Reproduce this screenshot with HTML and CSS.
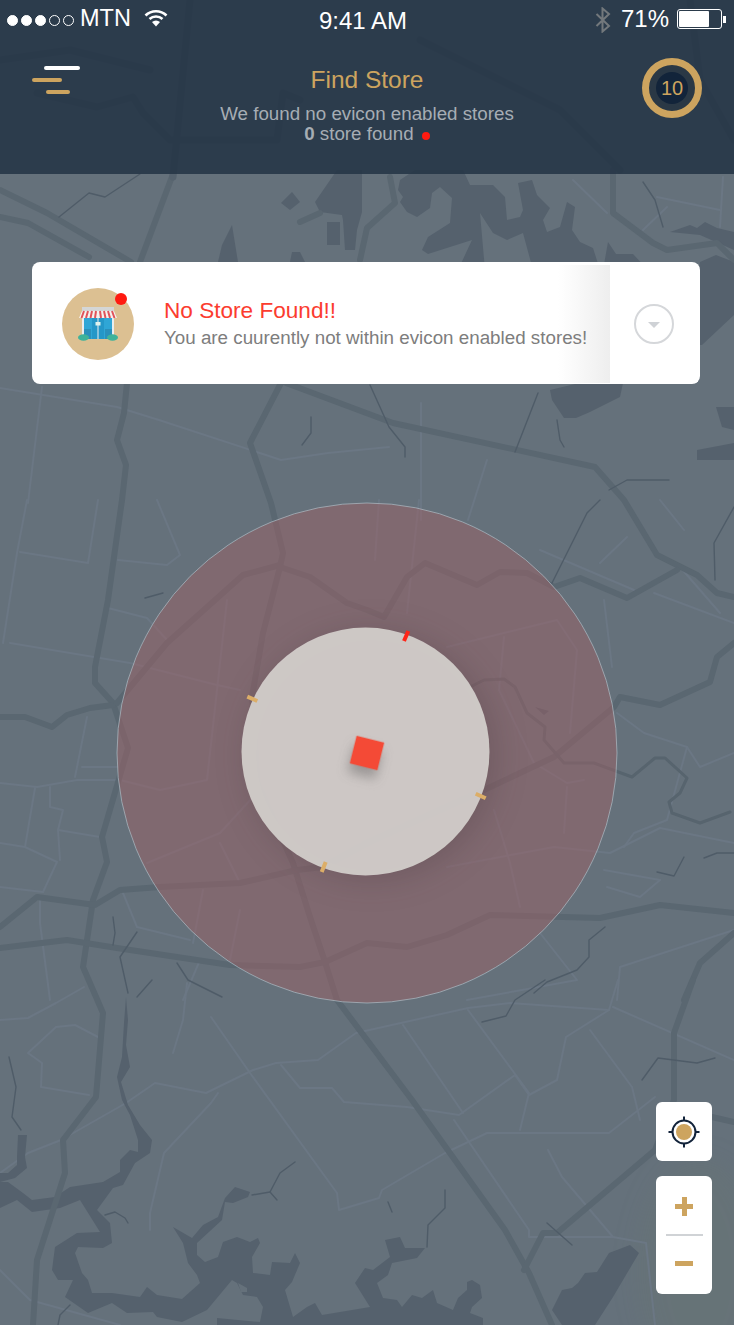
FILE: index.html

```html
<!DOCTYPE html>
<html lang="en">
<head>
  <meta charset="UTF-8" />
  <title>Find Store</title>
  <link rel="stylesheet" href="styles.css">
</head>
<body>
<div class="screen">

  <!-- map backdrop -->
  <svg class="map" viewBox="0 0 734 1325" width="734" height="1325">
    <ellipse class="tint" cx="700" cy="1270" rx="60" ry="110" />
    <g class="road-light">
      <polyline points="0,1173 28,1153 61,1140 126,1103 155,1083 206,1093 253,1070 276,1063 318,1060 356,1033 468,1008 510,1003 609,1010 618,980" />
      <polyline points="211,1017 250,1073 337,1193 339,1210 379,1198 382,1190 445,1153 487,1133 609,1133 655,1097" />
      <polyline points="281,1065 300,1088 332,1088 344,1102 407,1107 459,1115 515,1075 529,1095 557,1080 566,1037 609,1010" />
      <polyline points="468,1010 529,1093 520,1130" />
      <polyline points="403,1025 463,1113" />
      <polyline points="590,1030 632,1087 640,1120" />
      <polyline points="454,1120 529,1230 529,1237 613,1237 646,1243 655,1325" />
      <polyline points="548,1150 562,1177 613,1237" />
      <polyline points="98,1037 75,1025 56,1027 28,1053 42,1063 41,1087 89,1095" />
      <polyline points="0,1020 28,1018 56,1003 84,987" />
      <polyline points="173,1053 183,1020 187,983" />
      <polyline points="218,1093 211,1103 164,1153 150,1213 150,1230" />
      <polyline points="613,1007 734,1060" />
      <polyline points="0,388 117,407 159,420 281,460 328,453 389,447" />
      <polyline points="42,387 28,503" />
      <polyline points="487,460 468,520" />
      <polyline points="421,403 421,520" />
      <polyline points="573,180 607,213" />
      <polyline points="657,197 720,210" />
      <polyline points="667,207 643,230" />
      <polyline points="723,177 720,227" />
      <polyline points="27,500 17,553 3,643" />
      <polyline points="20,552 88,563 98,500" />
      <polyline points="118,560 167,565 180,555 157,500" />
      <polyline points="108,608 147,618 167,640" />
      <polyline points="10,643 130,663 217,685 240,690" />
      <polyline points="227,600 207,780 160,790 120,780 77,780 37,787 0,783" />
      <polyline points="82,767 117,767" />
      <polyline points="87,717 75,777" />
      <polyline points="35,788 25,847 57,862 43,892" />
      <polyline points="0,843 25,847" />
      <polyline points="50,787 50,807 63,810 58,830 100,837" />
      <polyline points="58,830 60,860" />
      <polyline points="0,887 43,892" />
      <polyline points="147,863 220,833 253,797" />
      <polyline points="220,843 240,883" />
      <polyline points="203,890 193,943" />
      <polyline points="240,910 230,960" />
      <polyline points="123,893 137,927 190,940" />
      <polyline points="40,900 40,923 50,1000" />
      <polyline points="200,960 183,1000" />
      <polyline points="419,500 407,613" />
      <polyline points="379,500 375,560" />
      <polyline points="447,647 557,620 577,650 570,733" />
      <polyline points="504,637 499,690 534,763 567,783 584,780" />
      <polyline points="612,667 604,600" />
      <polyline points="447,867 554,847 610,853 660,828 734,843" />
      <polyline points="494,810 510,863 520,907" />
      <polyline points="567,787 564,833" />
      <polyline points="617,713 644,733 687,747 700,767 734,753" />
      <polyline points="687,747 667,820 634,833 624,847" />
      <polyline points="540,550 634,590" />
      <polyline points="720,613 680,567" />
      <polyline points="734,623 654,593" />
      <polyline points="684,530 660,500" />
      <polyline points="627,537 600,563" />
      <polyline points="604,870 660,880" />
      <polyline points="607,887 640,897 660,880" />
      <polyline points="540,933 577,980 467,1000" />
      <polyline points="734,930 620,967 617,1000" />
      <polyline points="0,1270 30,1300 120,1325" />
    </g>
    <g class="water">
      <polygon points="315,202 337,170 362,170 362,212 357,230 355,250 345,250 343,220 342,215 320,212" />
      <polygon points="327,222 340,222 340,245 327,245" />
      <polygon points="398,190 400,180 415,170 463,170 470,185 493,185 505,197 507,220 520,217 523,210 518,183 532,180 537,195 550,208 543,220 547,232 560,227 567,202 575,207 572,230 580,242 593,248 600,270 533,270 523,233 507,240 493,233 480,213 485,270 458,270 472,240 428,254 422,250 428,237 450,223 452,198 440,187 432,193 430,208 417,217 407,212 400,202 403,197" />
      <polygon points="603,270 608,242 616,254 633,254 648,270" />
      <polygon points="670,232 690,225 697,228 705,222 717,228 734,232 734,250 700,235" />
      <polygon points="700,262 716,255 734,262 734,315 702,345 690,345" />
      <polygon points="550,390 575,384 623,383 620,397 590,412 576,418 564,418 552,400" />
      <polygon points="716,407 734,407 734,430 722,427" />
      <polygon points="697,450 734,443 734,460 697,460" />
      <polygon points="218,262 222,245 232,225 238,262" />
      <polygon points="281,203 292,192 300,202 290,210" />
      <polygon points="290,262 292,252 300,252 305,262" />
      <polygon points="138,1140 152,1140 150,1153 135,1163 123,1185 113,1188 97,1210 110,1223 112,1243 103,1248 78,1247 75,1253 82,1273 88,1280 92,1293 112,1293 140,1297 147,1287 157,1295 182,1299 200,1283 197,1275 188,1263 183,1243 173,1227 192,1238 203,1225 218,1217 225,1198 235,1187 250,1192 248,1197 233,1203 225,1202 222,1220 197,1243 197,1255 205,1262 218,1257 223,1242 237,1237 250,1242 258,1238 260,1243 252,1257 253,1273 270,1275 272,1262 290,1263 295,1253 300,1263 292,1282 285,1290 293,1317 307,1307 315,1303 322,1315 370,1307 355,1283 365,1268 373,1270 390,1257 385,1240 400,1237 405,1248 425,1248 417,1258 392,1263 388,1275 377,1283 383,1298 397,1300 402,1307 412,1295 422,1298 433,1290 437,1303 453,1310 458,1298 467,1290 467,1282 472,1280 480,1285 482,1298 472,1307 470,1313 483,1318 483,1325 217,1325 217,1318 260,1322 263,1307 257,1297 243,1295 237,1283 232,1280 207,1310 182,1322 157,1317 153,1312 127,1313 112,1303 88,1313 65,1297 73,1280 58,1280 52,1270 55,1247 77,1233 100,1232 80,1200 60,1208 32,1212 17,1200 0,1208 0,1182 8,1182 23,1193 32,1200 55,1197 70,1187 103,1182 120,1172 120,1160 130,1150 138,1152" />
      <polygon points="126,997 128,1020 126,1045 130,1067 121,1082 128,1105 140,1125 152,1140 138,1140 130,1115 122,1100 117,1077 122,1057 124,1023" />
      <polygon points="18,1135 27,1135 25,1157 27,1168 15,1178 0,1182 0,1173 8,1173 17,1165 17,1157" />
      <polygon points="630,1245 639,1253 613,1297 595,1325 562,1325 552,1310 562,1290 572,1288 578,1283 585,1273 597,1272 609,1253" />
      <polygon points="535,707 549,711 544,715" />
      <polygon class="island" points="238,1283 247,1288 247,1292 241,1292" />
    </g>
    <g class="road">
      <polyline points="0,190 47,213 131,262" />
      <polyline points="0,217 28,223 89,257" />
      <polyline points="173,174 140,262" />
      <polyline points="613,170 613,213 653,243 667,250 717,243 734,260" />
      <polyline points="390,177 395,203 367,228 360,260" />
      <polyline points="300,222 320,213" />
      <polyline points="127,383 124,413 117,440 126,465 122,500 108,600 95,667 95,683 113,703 128,748 102,837 107,862 93,900 83,967 103,1013 96,1097 63,1140 65,1173 37,1260 33,1325" />
      <polyline points="0,717 25,717 52,727 67,715 90,708 113,705" />
      <polyline points="117,703 167,643 243,575 280,565" />
      <polyline points="281,383 250,443 271,503 283,553 280,567 263,633 252,697 257,783 293,863 310,917 325,962 337,1000 412,1100 505,1230 529,1273 552,1325" />
      <polyline points="286,383 393,423 595,467 624,500 657,555 697,575 717,593 734,597" />
      <polyline points="280,567 310,577 347,603 367,610 384,617 407,577 425,563 477,585 500,572 527,573 554,587 580,578 627,598 677,570" />
      <polyline points="734,643 717,657 710,682 660,705 620,697 614,707 554,757 484,790 367,843 323,867 297,870 240,883 160,887 120,890 95,905 37,897 0,927" />
      <polyline points="0,948 67,940 117,948 230,965 300,967 325,962 367,943 407,947 447,935 490,915 600,918 660,905 734,913" />
      <polyline points="684,1000 700,963 734,933" />
      <polyline points="693,980 674,1033 674,1100 655,1150 557,1233 543,1233 524,1270" />
      <polyline points="712,1117 734,1122" />
    </g>
    <g class="road-thin">
      <polyline points="470,687 484,680 504,679 515,687 527,713 545,727 544,740 564,763 594,763 632,777 655,758 665,758 687,778 680,793 669,802 672,813 700,823 730,812" />
    </g>
    <g class="stream">
      <polyline points="9,1057 16,1087 12,1117 21,1130" />
      <polyline points="59,217 89,193 105,197 140,174" />
      <polyline points="311,417 311,433 302,445" />
      <polyline points="370,385 389,427 405,447 405,457" />
      <polyline points="538,393 515,452" />
      <polyline points="557,420 560,440 564,447" />
      <polyline points="609,490 627,480 669,480" />
      <polyline points="643,182 655,200 663,227" />
      <polyline points="552,583 567,553 587,513 600,500" />
      <polyline points="734,507 714,543 715,580" />
      <polyline points="657,872 674,876 684,857" />
      <polyline points="704,858 717,853 734,853" />
      <polyline points="605,927 589,940 589,957 577,970 547,982 534,993" />
      <polyline points="113,917 115,933 113,945" />
      <polyline points="137,932 120,957 128,993" />
      <polyline points="152,980 137,997" />
      <polyline points="177,963 188,980 222,997" />
      <polyline points="145,598 163,593" />
      <polyline points="105,1215 115,1212 125,1218 128,1223" />
      <polyline points="70,1305 60,1315 58,1325" />
      <polyline points="295,1162 280,1173 270,1192 252,1195" />
      <polyline points="270,1192 277,1200" />
      <polyline points="445,1190 445,1208 428,1225 427,1247" />
      <polyline points="388,1202 392,1212" />
      <polyline points="482,1022 506,1016 515,1000 545,980" />
      <polyline points="642,1080 658,1058 697,1063 715,1058" />
      <polyline points="547,1223 572,1245" />
    </g>
    <g class="header-roads">
      <polyline points="37,93 97,107 133,97 143,113 170,140 277,140 283,93 300,100" />
      <polyline points="190,0 173,177" />
      <polyline points="420,40 560,110 620,170" />
      <polyline points="0,60 70,50 150,70" />
      <polyline points="690,0 700,80 734,140" />
    </g>
  </svg>

  <header class="header">
    <div class="statusbar">
      <div class="status-left">
        <span class="signal"><i class="on"></i><i class="on"></i><i class="on"></i><i></i><i></i></span>
        <span class="carrier">MTN</span>
        <svg class="wifi" viewBox="0 0 24 18" width="24" height="18">
          <path d="M1.500 6.500 A15 15 0 0 1 22.500 6.500" />
          <path d="M5.500 10 A9.500 9.500 0 0 1 18.500 10" />
          <path class="wifi-tip" d="M12 17.500 L8 13 A6 6 0 0 1 16 13 Z" />
        </svg>
      </div>
      <div class="status-time">9:41 AM</div>
      <div class="status-right">
        <svg class="bluetooth" viewBox="0 0 16 26" width="16" height="26">
          <path d="M1.500 7 L14 19 L7.500 24.500 V1.500 L14 7 L1.500 19" />
        </svg>
        <span class="percent">71%</span>
        <span class="battery"><span class="battery-level"></span></span>
        <span class="battery-nub"></span>
      </div>
    </div>
    <div class="navbar">
      <div class="menu">
        <span class="menu-a"></span>
        <span class="menu-b"></span>
        <span class="menu-c"></span>
      </div>
      <div class="nav-title">
        <h1>Find Store</h1>
        <p>We found no evicon enabled stores</p>
        <p><span class="count">0</span> store found <span class="dot"></span></p>
      </div>
      <div class="score"><span>10</span></div>
    </div>
  </header>

  <section class="card">
    <div class="avatar">
      <svg viewBox="0 0 40 34" width="40" height="34">
        <rect class="s-wall" x="4" y="8" width="32" height="24" />
        <rect class="s-blue" x="6" y="10" width="28" height="22" />
        <rect class="s-dark" x="6" y="22" width="7" height="10" />
        <rect class="s-dark" x="27" y="22" width="7" height="10" />
        <rect class="s-door" x="14" y="10" width="12" height="22" />
        <rect class="s-wall" x="19.500" y="10" width="1" height="22" />
        <rect class="s-sign" x="17.500" y="15" width="5" height="3.500" />
        <rect class="s-roof" x="4" y="0" width="32" height="4" />
        <path class="s-awn" d="M4 4 H36 L39 11 H1 Z" />
        <path class="s-stripe" d="M6 4 L3.500 11 M10 4 L8 11 M14 4 L12.500 11 M18 4 L17 11 M22 4 L23 11 M26 4 L27.500 11 M30 4 L32 11 M34 4 L36.500 11" />
        <ellipse class="s-bush" cx="5.500" cy="30.500" rx="5.500" ry="3.200" />
        <ellipse class="s-bush" cx="34.500" cy="30.500" rx="5.500" ry="3.200" />
      </svg>
      <span class="avatar-dot"></span>
    </div>
    <div class="card-text">
      <h2>No Store Found!!</h2>
      <p>You are cuurently not within evicon enabled stores!</p>
    </div>
    <div class="card-action">
      <span class="chevron"><i></i></span>
    </div>
  </section>

  <svg class="radar" viewBox="0 0 502 502" width="502" height="502">
    <circle class="radar-outer" cx="251" cy="251" r="250" />
    <circle class="radar-inner" cx="249.500" cy="249.500" r="124" />
    <line class="tick-red" x1="292.300" y1="129" x2="288" y2="139" />
    <line class="tick" x1="131.300" y1="194.700" x2="141.300" y2="199" />
    <line class="tick" x1="359.700" y1="291.700" x2="369.700" y2="296.300" />
    <line class="tick" x1="209.700" y1="360" x2="205.700" y2="370" />
    <rect class="radar-pin" x="236.750" y="236.750" width="28.500" height="28.500" transform="rotate(14 251 251)" />
  </svg>

  <div class="controls">
    <button class="ctl ctl-locate">
      <svg viewBox="0 0 34 34" width="34" height="34">
        <circle class="loc-ring" cx="17" cy="17" r="11.500" />
        <circle class="loc-core" cx="17" cy="17" r="8" />
        <path class="loc-tick" d="M17 1.500 V5.500 M17 28.500 V32.500 M1.500 17 H5.500 M28.500 17 H32.500" />
      </svg>
    </button>
    <div class="ctl ctl-zoom">
      <span class="zoom-sign plus"></span>
      <span class="zoom-rule"></span>
      <span class="zoom-sign minus"></span>
    </div>
  </div>

</div>
</body>
</html>
```

FILE: styles.css

```css
* { box-sizing: border-box; }
body { margin: 0; font-family: "Liberation Sans", Arial, sans-serif; }
h1, h2, p { margin: 0; font-weight: normal; }

.screen { position: relative; width: 734px; height: 1325px; overflow: hidden; background: #65717b; }
.screen > * { position: relative; }
.screen > .map { position: absolute; left: 0; top: 0; }

/* map */
.map polyline { fill: none; stroke-linejoin: round; stroke-linecap: round; }
.tint { fill: rgba(110, 130, 100, .14); filter: blur(14px); }
.water polygon { fill: #55616d; }
.water .island { fill: #65717b; }
.road-light polyline { stroke: #6b7784; stroke-width: 2; }
.road polyline { stroke: #5a6771; stroke-width: 6; }
.road-thin polyline { stroke: #57646e; stroke-width: 3; }
.stream polyline { stroke: #4f5c68; stroke-width: 1.400; }
.header-roads polyline { stroke: #55626e; stroke-width: 7; }

/* header */
.header { height: 174px; background: rgba(36, 52, 70, .88); color: #fff; }
.statusbar { display: grid; grid-template-columns: 1fr auto 1fr; align-items: center; height: 40px; padding: 0 8px 0 7px; font-size: 23.500px; }
.status-left { display: flex; align-items: center; }
.signal { display: flex; gap: 3px; margin-right: 6px; }
.signal i { width: 11px; height: 11px; border-radius: 50%; border: 1px solid #fff; }
.signal i.on { background: #fff; }
.carrier { margin-top: -3px; }
.wifi { margin-left: 13px; margin-top: -4px; }
.wifi path { fill: none; stroke: #fff; stroke-width: 2.600; }
.wifi .wifi-tip { fill: #fff; stroke: none; }
.status-time { margin-right: 7px; margin-top: 2px; font-size: 24px; }
.status-right { display: flex; align-items: center; justify-content: flex-end; }
.bluetooth { margin-right: 10px; }
.bluetooth path { fill: none; stroke: #73787c; stroke-width: 2; }
.percent { margin-right: 8px; margin-top: -3px; font-size: 24px; }
.battery { width: 45px; height: 20px; border: 1px solid #fff; border-radius: 3px; padding: 1px; margin-top: -2px; }
.battery-level { display: block; width: 30px; height: 100%; background: #fff; border-radius: 1px; }
.battery-nub { width: 3px; height: 7px; background: #fff; margin-left: 1px; margin-top: -2px; }

.navbar { display: grid; grid-template-columns: 1fr auto 1fr; align-items: start; padding: 18px 32px 0; }
.menu { display: flex; flex-direction: column; width: 48px; margin-top: 8px; }
.menu span { flex: none; height: 4px; border-radius: 2px; margin-bottom: 8px; }
.menu-a { width: 36px; background: #fff; margin-left: 12px; }
.menu-b { width: 30px; background: #cda45f; }
.menu-c { width: 24px; background: #cda45f; margin-left: 14px; }
.nav-title { text-align: center; color: #a6adb4; font-size: 18.750px; line-height: 20px; padding-top: 8px; }
.nav-title h1 { color: #cda45f; font-size: 24.500px; line-height: 28px; margin-bottom: 10px; }
.count { font-weight: bold; }
.dot { display: inline-block; width: 8px; height: 8px; border-radius: 50%; background: #ff1a10; margin-left: 3px; }
.score { justify-self: end; width: 60px; height: 60px; border: 7px solid #cda45f; border-radius: 50%; background: #2a3845; display: flex; align-items: center; justify-content: center; }
.score span { width: 32px; height: 32px; border-radius: 50%; background: #12243a; color: #cda45f; font-size: 20px; line-height: 32px; text-align: center; }

/* notice card */
.card { display: flex; align-items: center; height: 122px; width: 668px; margin: 88px 0 0 32px; padding-top: 2px; background: #fff; border-radius: 8px; overflow: hidden; }
.avatar { position: relative; flex: none; width: 72px; height: 72px; margin-left: 30px; border-radius: 50%; background: #dcc092; display: flex; align-items: center; justify-content: center; }
.avatar-dot { position: absolute; top: 5px; right: 7px; width: 12px; height: 12px; border-radius: 50%; background: #ff1a10; }
.s-wall { fill: #e9edef; }
.s-blue { fill: #2fa6d6; }
.s-dark { fill: #2a90bb; }
.s-door { fill: #2497c8; }
.s-sign { fill: #dff3ee; }
.s-roof { fill: #d4d6d6; }
.s-awn { fill: #f5f1ee; }
.s-stripe { fill: none; stroke: #e0545a; stroke-width: 2; }
.s-bush { fill: #3fb39a; }
.card-text { position: relative; z-index: 1; flex: 1; padding-left: 30px; }
.card-text h2 { color: #fb3c2f; font-size: 22.600px; line-height: 28px; }
.card-text p { color: #7d7d7d; font-size: 18.800px; line-height: 26px; white-space: nowrap; }
.card-action { position: relative; flex: none; width: 88px; height: 118px; margin-right: 2px; background: #fff; display: flex; align-items: center; justify-content: center; }
.card-action::before { content: ""; position: absolute; left: -52px; top: 0; bottom: 0; width: 52px; background: linear-gradient(to right, rgba(238, 238, 238, 0), #eee); }
.chevron { width: 40px; height: 40px; border: 2px solid #d5d7da; border-radius: 50%; display: flex; align-items: center; justify-content: center; }
.chevron i { width: 0; height: 0; border-left: 6px solid transparent; border-right: 6px solid transparent; border-top: 6px solid #cfd2d6; margin-top: 1px; }

/* radar */
.radar { display: block; margin: 118px 0 0 116px; overflow: visible; }
.radar-outer { fill: rgba(155, 97, 102, .5); stroke: rgba(175, 195, 205, .65); stroke-width: 1; }
.radar-inner { fill: rgba(210, 206, 202, .95); filter: drop-shadow(6px 4px 16px rgba(50, 35, 40, .22)); }
.radar-pin { fill: #f44a36; filter: drop-shadow(0 9px 6px rgba(60, 60, 60, .35)); }
.tick { stroke: #dcae68; stroke-width: 4; }
.tick-red { stroke: #ff2418; stroke-width: 4; }

/* map controls */
.controls { display: flex; flex-direction: column; gap: 15px; width: 56px; margin: 98px 0 0 656px; }
.ctl { display: flex; background: #fff; border: 0; padding: 0; border-radius: 6px; }
.ctl-locate { width: 56px; height: 59px; align-items: center; justify-content: center; }
.loc-ring { fill: none; stroke: #12233a; stroke-width: 2; }
.loc-core { fill: #cda45f; }
.loc-tick { fill: none; stroke: #12233a; stroke-width: 2; }
.ctl-zoom { height: 118px; flex-direction: column; align-items: center; }
.zoom-sign { position: relative; display: block; width: 18px; height: 5px; background: #cda45f; }
.zoom-sign.plus { margin-top: 28px; }
.zoom-sign.plus::after { content: ""; position: absolute; left: 6.500px; top: -7px; width: 5px; height: 19px; background: #cda45f; }
.zoom-rule { width: 37px; height: 2px; background: #d0d3d6; margin: 25px 0; }
```
